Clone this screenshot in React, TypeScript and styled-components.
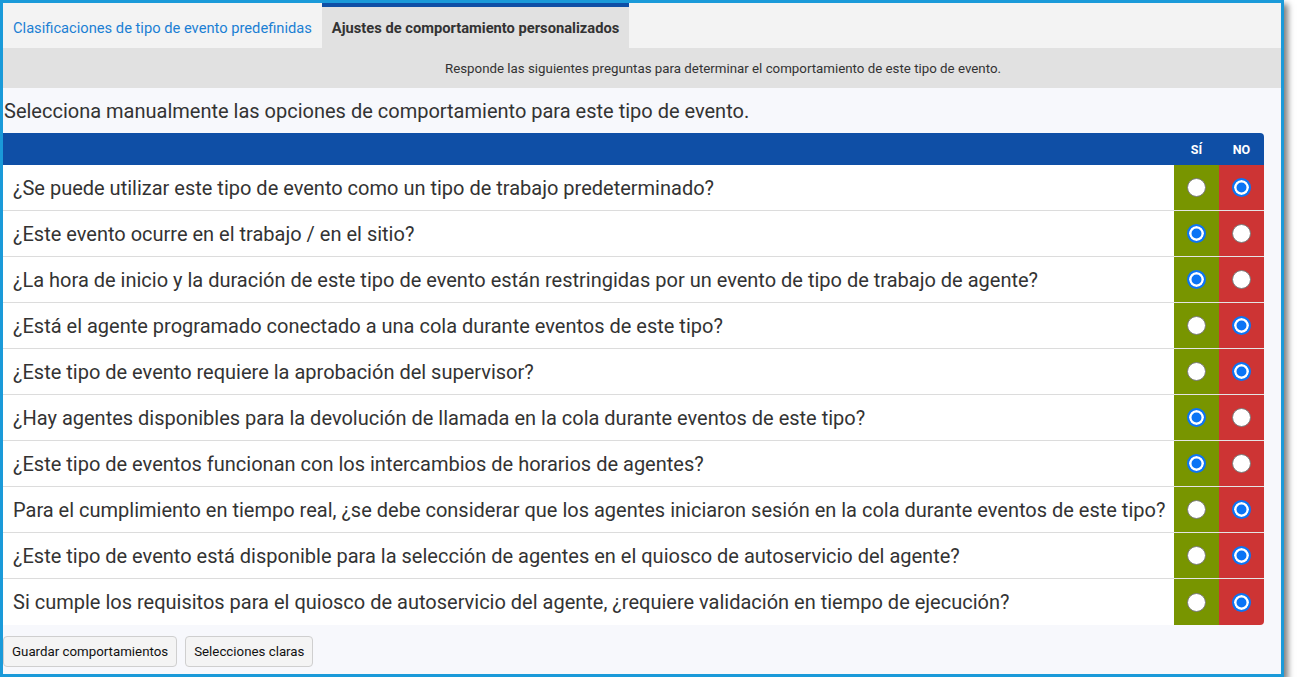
import React, { useState } from "react";
import styled, { createGlobalStyle, css } from "styled-components";

const GlobalStyle = createGlobalStyle`
  html, body {
    margin: 0;
    padding: 0;
    background: #ffffff;
    font-family: Roboto, "Liberation Sans", Arial, sans-serif;
  }
  * { box-sizing: border-box; }
`;

const Frame = styled.div`
  width: 1284px;
  height: 677px;
  border: 3px solid #1a9ad9;
  background: #f7f8fc;
  box-shadow: 4px 4px 6px rgba(0, 0, 0, 0.5);
  display: flex;
  flex-direction: column;
`;

const TabBar = styled.div`
  display: flex;
  height: 45px;
  background: #f3f3f3;
`;

const Tab = styled.button<{ $active?: boolean }>`
  display: flex;
  align-items: center;
  padding: 0 10px;
  border: none;
  border-top: 4px solid transparent;
  background: transparent;
  font-family: Roboto, "Liberation Sans", Arial, sans-serif;
  font-size: 14.7px;
  color: #1b7fd3;
  cursor: pointer;
  ${(p) =>
    p.$active &&
    css`
      border-top-color: #0f4fa6;
      background: #e1e1e1;
      color: #333333;
      font-weight: 700;
    `}
`;

const InfoBar = styled.div`
  height: 40px;
  background: #e1e1e1;
  display: flex;
  align-items: center;
  justify-content: center;
  padding-left: 162px;
  font-size: 13.3px;
  color: #333333;
`;

const Content = styled.div`
  display: flex;
  flex-direction: column;
  padding-right: 17px;
`;

const Heading = styled.h2`
  margin: 0;
  height: 45px;
  display: flex;
  align-items: center;
  padding-left: 1px;
  font-size: 20px;
  font-weight: 400;
  color: #333333;
`;

const Table = styled.div`
  display: grid;
  grid-template-columns: 1fr 45px 45px;
  border-radius: 0 4px 4px 0;
  overflow: hidden;
  background: #ffffff;
`;

const HeadCell = styled.div`
  height: 32px;
  background: #0f4fa6;
  color: #ffffff;
  font-size: 12.5px;
  font-weight: 700;
  display: flex;
  align-items: center;
  justify-content: center;
`;

const QuestionCell = styled.div<{ $last?: boolean }>`
  height: 46px;
  display: flex;
  align-items: center;
  padding-left: 10px;
  font-size: 20px;
  color: #333333;
  background: #ffffff;
  border-bottom: ${(p) => (p.$last ? "none" : "1px solid #dcdcdc")};
  white-space: nowrap;
`;

const ChoiceCell = styled.label<{ $tone: "yes" | "no"; $last?: boolean }>`
  height: 46px;
  display: flex;
  align-items: center;
  justify-content: center;
  background: ${(p) => (p.$tone === "yes" ? "#789500" : "#cd3434")};
  border-bottom: ${(p) => (p.$last ? "none" : "1px solid #e4e4e4")};
  cursor: pointer;
`;

const Radio = styled.span<{ $checked: boolean }>`
  width: 19px;
  height: 19px;
  border-radius: 50%;
  background: ${(p) => (p.$checked ? "#0b74f5" : "#ffffff")};
  border: ${(p) => (p.$checked ? "2px solid #0b74f5" : "1px solid #7a7a7a")};
  box-shadow: ${(p) => (p.$checked ? "inset 0 0 0 2.5px #ffffff" : "none")};
`;

const ButtonRow = styled.div`
  display: flex;
  gap: 8px;
  margin-top: 11px;
`;

const Button = styled.button`
  height: 31px;
  padding: 0 8px;
  border: 1px solid #cfcfcf;
  border-radius: 4px;
  background: #f4f4f4;
  font-family: Roboto, "Liberation Sans", Arial, sans-serif;
  font-size: 13.3px;
  color: #111111;
  cursor: pointer;
`;

const questions: { text: string; yes: boolean }[] = [
  { text: "¿Se puede utilizar este tipo de evento como un tipo de trabajo predeterminado?", yes: false },
  { text: "¿Este evento ocurre en el trabajo / en el sitio?", yes: true },
  { text: "¿La hora de inicio y la duración de este tipo de evento están restringidas por un evento de tipo de trabajo de agente?", yes: true },
  { text: "¿Está el agente programado conectado a una cola durante eventos de este tipo?", yes: false },
  { text: "¿Este tipo de evento requiere la aprobación del supervisor?", yes: false },
  { text: "¿Hay agentes disponibles para la devolución de llamada en la cola durante eventos de este tipo?", yes: true },
  { text: "¿Este tipo de eventos funcionan con los intercambios de horarios de agentes?", yes: true },
  { text: "Para el cumplimiento en tiempo real, ¿se debe considerar que los agentes iniciaron sesión en la cola durante eventos de este tipo?", yes: false },
  { text: "¿Este tipo de evento está disponible para la selección de agentes en el quiosco de autoservicio del agente?", yes: false },
  { text: "Si cumple los requisitos para el quiosco de autoservicio del agente, ¿requiere validación en tiempo de ejecución?", yes: false },
];

export default function App() {
  const [answers, setAnswers] = useState<(boolean | null)[]>(questions.map((q) => q.yes));
  const set = (i: number, v: boolean | null) =>
    setAnswers((a) => a.map((x, j) => (j === i ? v : x)));

  return (
    <>
      <GlobalStyle />
      <Frame>
        <TabBar>
          <Tab>Clasificaciones de tipo de evento predefinidas</Tab>
          <Tab $active>Ajustes de comportamiento personalizados</Tab>
        </TabBar>
        <InfoBar>
          Responde las siguientes preguntas para determinar el comportamiento de este tipo de evento.
        </InfoBar>
        <Content>
          <Heading>Selecciona manualmente las opciones de comportamiento para este tipo de evento.</Heading>
          <Table>
            <HeadCell />
            <HeadCell>SÍ</HeadCell>
            <HeadCell>NO</HeadCell>
            {questions.map((q, i) => {
              const last = i === questions.length - 1;
              return (
                <React.Fragment key={i}>
                  <QuestionCell $last={last}>{q.text}</QuestionCell>
                  <ChoiceCell $tone="yes" $last={last} onClick={() => set(i, true)}>
                    <Radio $checked={answers[i] === true} />
                  </ChoiceCell>
                  <ChoiceCell $tone="no" $last={last} onClick={() => set(i, false)}>
                    <Radio $checked={answers[i] === false} />
                  </ChoiceCell>
                </React.Fragment>
              );
            })}
          </Table>
          <ButtonRow>
            <Button>Guardar comportamientos</Button>
            <Button onClick={() => setAnswers(questions.map(() => null))}>Selecciones claras</Button>
          </ButtonRow>
        </Content>
      </Frame>
    </>
  );
}
